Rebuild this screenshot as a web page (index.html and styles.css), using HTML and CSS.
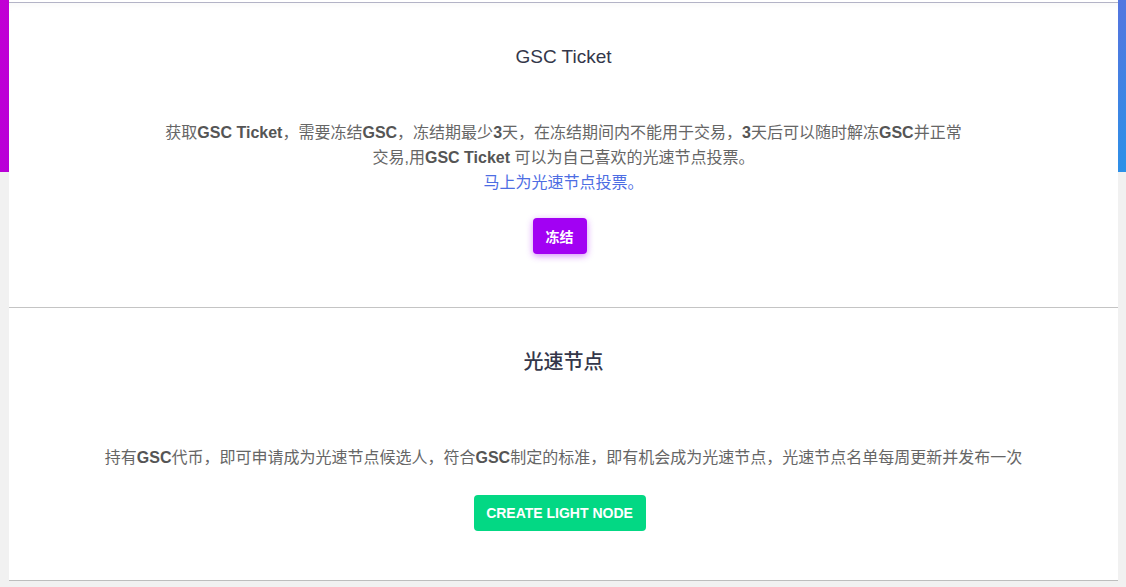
FILE: index.html
```html
<!DOCTYPE html>
<html lang="zh">
<head>
<meta charset="utf-8">
<link rel="stylesheet" href="styles.css">
</head>
<body>
<div class="hero-bg"></div>
<div class="page">
  <div class="card">
    <section class="block block-ticket">
      <h2 class="title">GSC Ticket</h2>
      <p class="desc">获取<b>GSC Ticket</b>，需要冻结<b>GSC</b>，冻结期最少<b>3</b>天，在冻结期间内不能用于交易，<b>3</b>天后可以随时解冻<b>GSC</b>并正常<br>交易,用<b>GSC Ticket</b> 可以为自己喜欢的光速节点投票。<br><a class="link" href="#">马上为光速节点投票。</a></p>
      <button class="btn btn-purple">冻结</button>
    </section>
    <section class="block block-node">
      <h2 class="title title-cn">光速节点</h2>
      <p class="desc desc-node">持有<b>GSC</b>代币，即可申请成为光速节点候选人，符合<b>GSC</b>制定的标准，即有机会成为光速节点，光速节点名单每周更新并发布一次</p>
      <button class="btn btn-green">CREATE LIGHT NODE</button>
    </section>
  </div>
</div>
</body>
</html>
```

FILE: styles.css
```css
html, body {
  margin: 0;
  padding: 0;
}
body {
  background: #f1f1f1;
  font-family: "Liberation Sans", "Noto Sans CJK SC", sans-serif;
  position: relative;
  min-height: 587px;
}
.hero-bg {
  position: absolute;
  left: 0;
  top: 0;
  right: 0;
  height: 172px;
  background: linear-gradient(115deg, #c200d4 0%, #b800d8 8%, #8d2ee0 45%, #5a70e0 90%, #4f79e0 94%, #2a92e8 100%);
}
.page {
  position: relative;
  padding: 0 8px 0 9px;
}
.card {
  background: #fff;
  padding-top: 2px;
}
.block {
  display: flex;
  flex-direction: column;
  align-items: center;
  text-align: center;
}
.block-ticket {
  border-top: 1px solid #b3b3c6;
  box-shadow: inset 0 8px 8px -6px rgba(0,0,0,0.035);
  padding: 40px 0 53px;
  border-bottom: 1px solid #c4c4c4;
}
.block-node {
  padding: 40px 0 49px;
  border-bottom: 1px solid #bdbdbd;
}
.title {
  margin: 0;
  font-size: 19px;
  line-height: 28px;
  font-weight: normal;
  color: #34374a;
}
.title-cn {
  font-size: 20px;
  font-weight: 500;
}
.desc {
  margin: 49px 0 0;
  font-size: 16px;
  line-height: 25px;
  color: #666;
  white-space: nowrap;
}
.desc b {
  color: #555;
}
.desc-node {
  margin-top: 69px;
}
.link {
  color: #4d6de3;
  text-decoration: none;
}
.btn {
  border: none;
  border-radius: 4px;
  color: #fff;
  font-family: "Liberation Sans", "Noto Sans CJK SC", sans-serif;
  font-weight: bold;
  font-size: 14px;
  height: 36px;
  padding: 0;
  margin-right: 8px;
  cursor: pointer;
}
.btn-purple {
  margin-top: 23px;
  width: 54px;
  background: #a201f3;
  box-shadow: 0 2px 7px rgba(162, 1, 243, 0.45);
}
.btn-green {
  margin-top: 25px;
  width: 172px;
  background: #03d884;
}
```
